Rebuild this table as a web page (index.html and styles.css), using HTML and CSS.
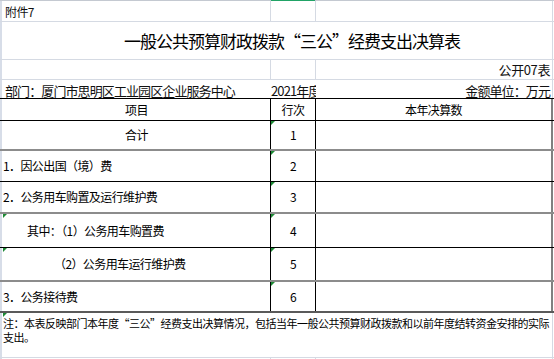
FILE: index.html
```html
<!DOCTYPE html>
<html lang="zh-CN">
<head>
<meta charset="utf-8">
<title>一般公共预算财政拨款“三公”经费支出决算表</title>
<link rel="stylesheet" href="styles.css">
</head>
<body>
<div class="sheet">
  <div class="colbar"><span></span><span class="sel"></span><span></span></div>

  <div class="row r-att light">
    <div class="cell ca att">附件7</div>
    <div class="cell cb"></div>
    <div class="cell cc"></div>
  </div>

  <div class="row r-title">
    <div class="cell title">一般公共预算财政拨款“三公”经费支出决算表</div>
  </div>

  <div class="row r-code light">
    <div class="cell ca"></div>
    <div class="cell cb"></div>
    <div class="cell cc right">公开07表</div>
  </div>

  <div class="row r-dept">
    <div class="cell ca">部门：厦门市思明区工业园区企业服务中心</div>
    <div class="cell cb clip">2021年度</div>
    <div class="cell cc right edge">金额单位：万元</div>
  </div>

  <div class="row t r-head">
    <div class="cell ca center">项目</div>
    <div class="cell cb center">行次</div>
    <div class="cell cc center">本年决算数</div>
  </div>

  <div class="row t r-sum gray">
    <div class="cell ca center">合计</div>
    <div class="cell cb center tri">1</div>
    <div class="cell cc"></div>
  </div>

  <div class="row t r-1">
    <div class="cell ca">1．因公出国（境）费</div>
    <div class="cell cb center tri">2</div>
    <div class="cell cc"></div>
  </div>

  <div class="row t r-2 gray">
    <div class="cell ca">2．公务用车购置及运行维护费</div>
    <div class="cell cb center tri">3</div>
    <div class="cell cc"></div>
  </div>

  <div class="row t r-3">
    <div class="cell ca tri ind1">其中：（1）公务用车购置费</div>
    <div class="cell cb center tri">4</div>
    <div class="cell cc"></div>
  </div>

  <div class="row t r-4 gray">
    <div class="cell ca tri ind2">（2）公务用车运行维护费</div>
    <div class="cell cb center tri">5</div>
    <div class="cell cc"></div>
  </div>

  <div class="row t r-5 dark">
    <div class="cell ca">3．公务接待费</div>
    <div class="cell cb center tri">6</div>
    <div class="cell cc"></div>
  </div>

  <div class="row r-note">
    <div class="cell note tri">注：本表反映部门本年度“三公”经费支出决算情况，包括当年一般公共预算财政拨款和以前年度结转资金安排的实际支出。</div>
  </div>

  <div class="row r-tail light">
    <div class="cell ca"></div>
    <div class="cell cb"></div>
    <div class="cell cc"></div>
  </div>
</div>
</body>
</html>
```

FILE: styles.css
```css
html, body {
  margin: 0;
  padding: 0;
  background: #fff;
}

body {
  font-family: "Noto Sans CJK SC", "Noto Sans", sans-serif;
  color: #111;
}

.sheet {
  width: 554px;
  height: 359px;
  overflow: hidden;
  background: linear-gradient(to right, #d7dde8 0, #d7dde8 2px, #fff 2px, #fff 100%);
}

.colbar {
  height: 1px;
  display: grid;
  grid-template-columns: 271px 44px 1fr;
  background: #c4c9d1;
}

.colbar .sel {
  background: #21a366;
}

.row {
  display: grid;
  grid-template-columns: 268px 45px 237px;
  padding-left: 3px;
  box-sizing: border-box;
  border-bottom: 1px solid #d5dae3;
}

.cell {
  position: relative;
  box-sizing: border-box;
  display: flex;
  align-items: center;
  white-space: nowrap;
  font-size: 12px;
  letter-spacing: -0.6px;
  line-height: 1;
}

.light .cell {
  border-right: 1px solid #d5dae3;
}

.center {
  justify-content: center;
}

.right {
  justify-content: flex-end;
  padding-right: 2px;
}

.edge {
  border-right: 1px solid #d5dae3;
}

.clip {
  overflow: hidden;
  font-size: 13px;
}

/* upper rows */
.r-att {
  height: 21px;
}

.att {
  align-items: flex-end;
  padding: 0 0 3px 2px;
}

.r-title {
  height: 38px;
}

.title {
  grid-column: 1 / -1;
  border-right: 1px solid #d5dae3;
  padding-left: 121px;
  font-size: 17px;
  letter-spacing: -1px;
  color: #000;
}

.r-code {
  height: 20px;
}

.r-code .cell {
  font-size: 13px;
  letter-spacing: -0.4px;
}

.r-dept {
  height: 19px;
  border-bottom: 1px solid #000;
}

.r-dept .cell {
  font-size: 13px;
  letter-spacing: -0.9px;
  align-items: flex-end;
  padding-bottom: 1px;
}

.r-dept .ca {
  padding-left: 2px;
}

/* table rows */
.t {
  border-bottom: 1px solid #000;
  color: #000;
}

.t .ca,
.t .cb {
  border-right: 1px solid #000;
}

.t .cc {
  border-right: 2px solid #808080;
}

.t.gray {
  border-bottom: 2px solid #8c8c8c;
}

.t.dark {
  border-bottom: 2px solid #5a5a5a;
}

.r-head { height: 22px; }
.r-sum  { height: 30px; }
.r-1    { height: 31px; }
.r-2    { height: 32px; }
.r-3    { height: 34px; }
.r-4    { height: 34px; }
.r-5    { height: 31px; }

.ind1 {
  padding-left: 24px;
}

.ind2 {
  padding-left: 51px;
}

/* note */
.r-note {
  height: 45px;
}

.note {
  grid-column: 1 / -1;
  display: block;
  white-space: normal;
  border-right: 1px solid #d5dae3;
  padding-top: 3px;
  font-size: 11px;
  letter-spacing: -0.5px;
  line-height: 14px;
  color: #000;
}

.r-tail {
  height: 10px;
  border-bottom: none;
}

/* spreadsheet error markers */
.tri::before {
  content: "";
  position: absolute;
  top: 0;
  left: 0;
  border-top: 4px solid #1d8a35;
  border-right: 4px solid transparent;
}
```
